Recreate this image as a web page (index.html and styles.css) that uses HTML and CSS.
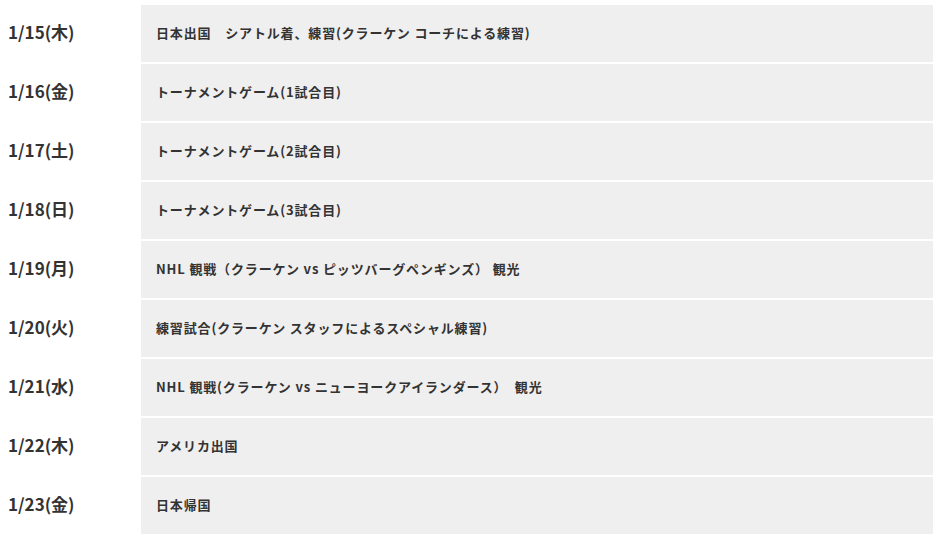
FILE: index.html
```html
<!DOCTYPE html>
<html lang="ja">
<head>
<meta charset="utf-8">
<link rel="stylesheet" href="styles.css">
</head>
<body>
<div class="schedule">
  <div class="row"><div class="date">1/15(木)</div><div class="desc">日本出国　シアトル着、練習(クラーケン コーチによる練習)</div></div>
  <div class="row"><div class="date">1/16(金)</div><div class="desc">トーナメントゲーム(1試合目)</div></div>
  <div class="row"><div class="date">1/17(土)</div><div class="desc">トーナメントゲーム(2試合目)</div></div>
  <div class="row"><div class="date">1/18(日)</div><div class="desc">トーナメントゲーム(3試合目)</div></div>
  <div class="row"><div class="date">1/19(月)</div><div class="desc">NHL 観戦（クラーケン vs ピッツバーグペンギンズ） 観光</div></div>
  <div class="row"><div class="date">1/20(火)</div><div class="desc">練習試合(クラーケン スタッフによるスペシャル練習)</div></div>
  <div class="row"><div class="date">1/21(水)</div><div class="desc">NHL 観戦(クラーケン vs ニューヨークアイランダース）　観光</div></div>
  <div class="row"><div class="date">1/22(木)</div><div class="desc">アメリカ出国</div></div>
  <div class="row"><div class="date">1/23(金)</div><div class="desc">日本帰国</div></div>
</div>
</body>
</html>
```
FILE: styles.css
```css
html, body {
  margin: 0;
  padding: 0;
  background: #fff;
}
body {
  font-family: "Noto Sans CJK JP", "Noto Sans", sans-serif;
  color: #333;
}
.schedule {
  display: flex;
  flex-direction: column;
  gap: 2px;
  padding: 5px 7px 0 8px;
}
.row {
  display: flex;
  height: 57px;
}
.date {
  width: 133px;
  flex: none;
  display: flex;
  align-items: center;
  font-size: 17px;
  font-weight: 700;
  padding-bottom: 5px;
}
.desc {
  flex: 1;
  background: #efefef;
  display: flex;
  align-items: center;
  padding-left: 15px;
  padding-bottom: 2px;
  font-size: 13px;
  font-weight: 700;
  letter-spacing: 0.065em;
}
```
